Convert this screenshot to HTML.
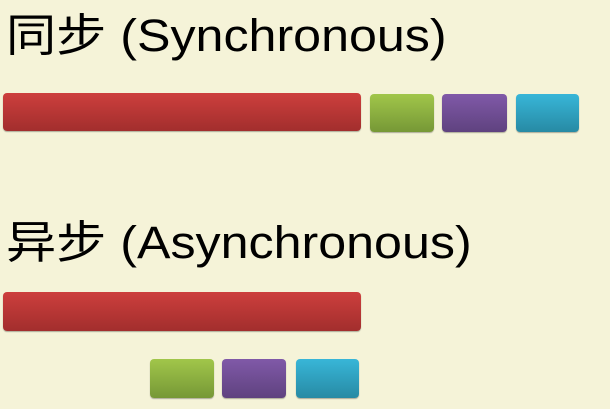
<!DOCTYPE html>
<html><head><style>
body{margin:0;width:610px;height:409px;background:#f5f3d8;position:relative;overflow:hidden;font-family:"Liberation Sans","Noto Sans CJK SC",sans-serif}
.t{position:absolute;left:6px;font-size:45px;color:#000;white-space:nowrap;line-height:1;transform:scaleX(1.115);transform-origin:0 0}
.b{position:absolute;border-radius:4px;box-shadow:0 1px 1px rgba(0,0,0,.3)}
.r{background:linear-gradient(#cd3f3d,#a22e2d)}
.g{background:linear-gradient(#a1c64a,#769836)}
.p{background:linear-gradient(#8059a8,#5f427f)}
.c{background:linear-gradient(#38b6d8,#278aa4)}
</style></head><body>
<div class="t" style="top:13px">同步 (Synchronous)</div>
<div class="b r" style="left:3px;top:93px;width:358px;height:38px"></div>
<div class="b g" style="left:370px;top:94px;width:64px;height:38px"></div>
<div class="b p" style="left:442px;top:94px;width:65px;height:38px"></div>
<div class="b c" style="left:516px;top:94px;width:63px;height:38px"></div>
<div class="t" style="top:220px">异步 (Asynchronous)</div>
<div class="b r" style="left:3px;top:292px;width:358px;height:39px"></div>
<div class="b g" style="left:150px;top:359px;width:64px;height:39px"></div>
<div class="b p" style="left:222px;top:359px;width:64px;height:39px"></div>
<div class="b c" style="left:296px;top:359px;width:63px;height:39px"></div>
</body></html>
